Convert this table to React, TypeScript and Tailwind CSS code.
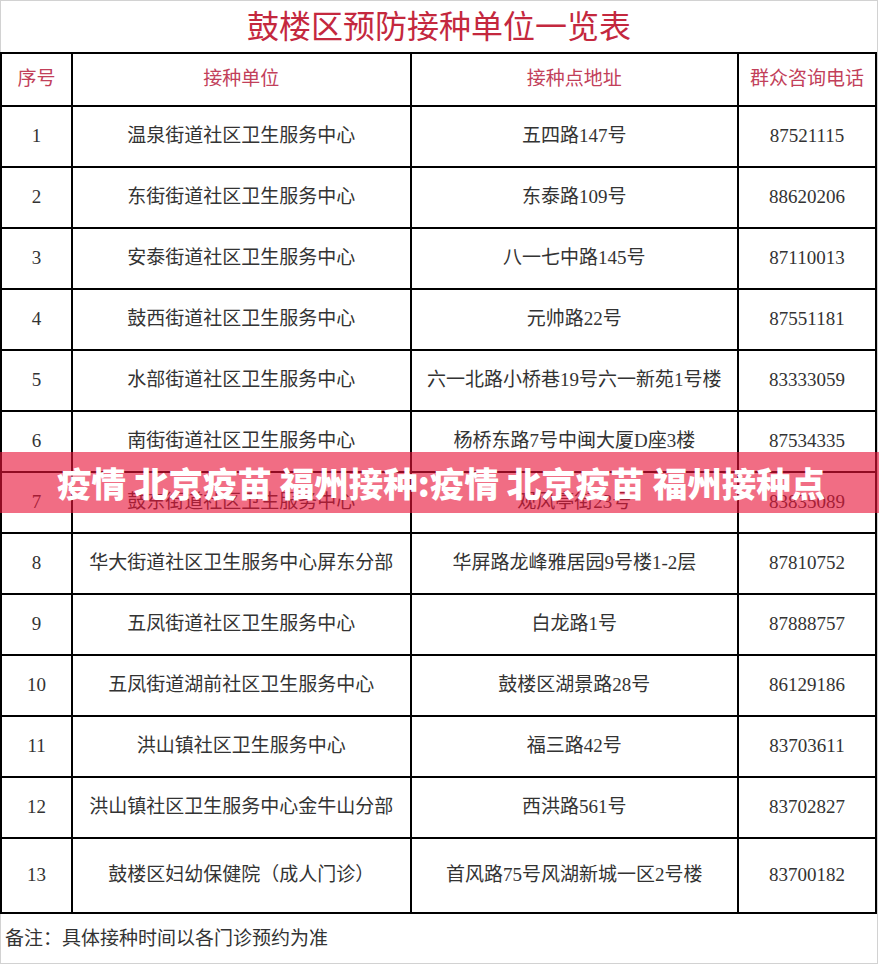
const rows = [
  ["1", "温泉街道社区卫生服务中心", "五四路147号", "87521115"],
  ["2", "东街街道社区卫生服务中心", "东泰路109号", "88620206"],
  ["3", "安泰街道社区卫生服务中心", "八一七中路145号", "87110013"],
  ["4", "鼓西街道社区卫生服务中心", "元帅路22号", "87551181"],
  ["5", "水部街道社区卫生服务中心", "六一北路小桥巷19号六一新苑1号楼", "83333059"],
  ["6", "南街街道社区卫生服务中心", "杨桥东路7号中闽大厦D座3楼", "87534335"],
  ["7", "鼓东街道社区卫生服务中心", "观风亭街23号", "83835089"],
  ["8", "华大街道社区卫生服务中心屏东分部", "华屏路龙峰雅居园9号楼1-2层", "87810752"],
  ["9", "五凤街道社区卫生服务中心", "白龙路1号", "87888757"],
  ["10", "五凤街道湖前社区卫生服务中心", "鼓楼区湖景路28号", "86129186"],
  ["11", "洪山镇社区卫生服务中心", "福三路42号", "83703611"],
  ["12", "洪山镇社区卫生服务中心金牛山分部", "西洪路561号", "83702827"],
  ["13", "鼓楼区妇幼保健院（成人门诊）", "首风路75号风湖新城一区2号楼", "83700182"],
];

const serif = { fontFamily: '"Liberation Serif", "Noto Sans CJK SC", serif' };

export default function App() {
  return (
    <div className="relative h-[967px] w-[879px] overflow-hidden bg-white" style={serif}>
      <div className="h-[964px] w-[878px] border border-[#d2d2d2] bg-white">
        <div className="flex h-[51px] items-center justify-center text-[32px] leading-none text-[#c4283e]">
          鼓楼区预防接种单位一览表
        </div>

        <table className="-ml-px table-fixed border-collapse text-[19px] text-[#333]">
          <colgroup>
            <col className="w-[72px]" />
            <col className="w-[339px]" />
            <col className="w-[328px]" />
            <col className="w-[139px]" />
          </colgroup>
          <thead>
            <tr className="h-[53px] text-[#c2405a]">
              <th className="border-2 border-black font-normal">序号</th>
              <th className="border-2 border-black font-normal">接种单位</th>
              <th className="border-2 border-black font-normal">接种点地址</th>
              <th className="border-2 border-black font-normal">群众咨询电话</th>
            </tr>
          </thead>
          <tbody>
            {rows.map((r, i) => (
              <tr key={r[0]} className={i === rows.length - 1 ? "h-[75px]" : "h-[61px]"}>
                {r.map((c, j) => (
                  <td key={j} className="whitespace-nowrap border-2 border-black p-0 text-center">
                    {c}
                  </td>
                ))}
              </tr>
            ))}
          </tbody>
        </table>

        <div className="flex h-[50px] items-center pl-[4px] text-[19px] text-[#333]">
          备注：具体接种时间以各门诊预约为准
        </div>
      </div>

      {/* title banner laid over the table */}
      <div className="absolute left-0 right-0 top-[452px] flex h-[61px] items-center bg-[rgba(232,20,56,0.62)] pl-[57px]">
        <span
          className="whitespace-nowrap text-[34.5px] font-black leading-none text-white"
          style={{ fontFamily: '"Noto Sans CJK SC", sans-serif' }}
        >
          疫情 北京疫苗 福州接种:疫情 北京疫苗 福州接种点
        </span>
      </div>
    </div>
  );
}
